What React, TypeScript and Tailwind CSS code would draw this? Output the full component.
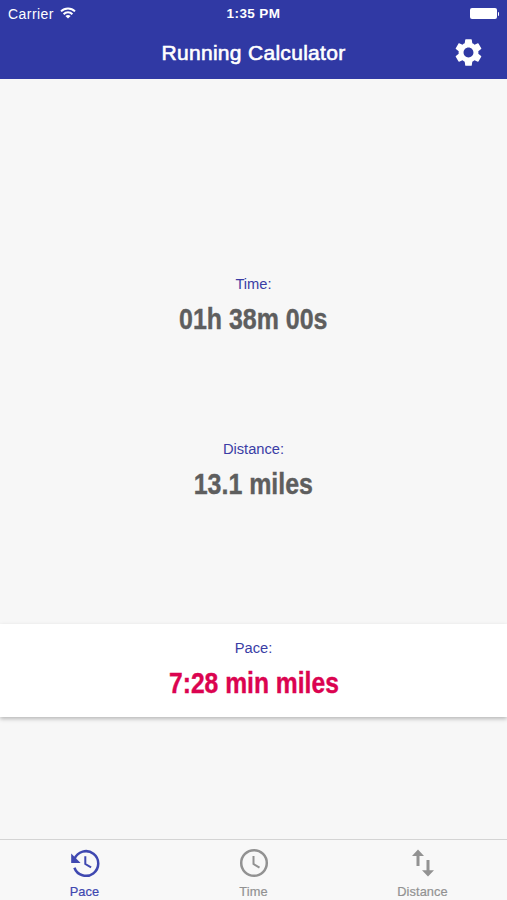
import type { ReactNode } from 'react';
import { MdSettings } from 'react-icons/md';

interface ReadingProps {
  label: string;
  value: string;
  highlight?: boolean;
}

function Reading({ label, value, highlight = false }: ReadingProps) {
  return (
    <div className="flex flex-col items-center whitespace-nowrap">
      <span className="text-[14.7px] leading-5 text-[#3a3da5]">{label}</span>
      <span
        className={`mt-[7px] origin-center text-[29px] leading-9 font-bold [-webkit-text-stroke:0.4px_currentColor] ${
          highlight ? 'scale-x-[0.85] text-[#db0350]' : 'scale-x-[0.86] text-[#5e5e5e]'
        }`}
      >
        {value}
      </span>
    </div>
  );
}

function StatusBar() {
  return (
    <div className="grid h-[27px] grid-cols-3 items-center px-2 text-sm leading-none">
      <div className="flex items-center gap-[6px] pt-px">
        <span className="tracking-[0.45px]">Carrier</span>
        <svg width="16" height="12" viewBox="0 0 16 12" className="mb-[3px]" fill="none" stroke="currentColor" strokeWidth="2">
          <path d="M1 4.4a10 10 0 0 1 14 0M3.6 7.2a6.2 6.2 0 0 1 8.8 0" />
          <path d="M8 11.5 5.4 9.1a3.8 3.8 0 0 1 5.2 0z" fill="currentColor" stroke="none" />
        </svg>
      </div>
      <span className="pt-px text-center text-[13.5px] font-bold tracking-[0.4px]">1:35 PM</span>
      <div className="flex items-center justify-end gap-px">
        <span className="h-[11px] w-[27px] rounded-[2px] bg-white" />
        <span className="h-1 w-px rounded-r bg-white" />
      </div>
    </div>
  );
}

function Tab({ label, active = false, children }: { label: string; active?: boolean; children: ReactNode }) {
  return (
    <button className={`flex flex-col items-center pt-2 ${active ? 'text-[#3f48b0]' : 'text-[#929292]'}`}>
      <svg width="30" height="30" viewBox="0 0 30 30" fill="none" stroke="currentColor" strokeWidth="2.5">
        {children}
      </svg>
      <span className="mt-[6px] text-[12.8px] leading-4 tracking-[0.1px] [-webkit-text-stroke:0.2px_currentColor]">{label}</span>
    </button>
  );
}

export default function App() {
  return (
    <div className="flex h-[900px] w-full flex-col overflow-hidden bg-[#f7f7f7] font-['Liberation_Sans',Arial,sans-serif]">
      <header className="h-[79px] shrink-0 bg-[#3039a4] text-white">
        <StatusBar />
        <div className="grid h-[50px] grid-cols-[60px_1fr_60px] items-center">
          <h1 className="col-start-2 text-center text-[21px] leading-none tracking-[0.3px] [-webkit-text-stroke:0.6px_white]">
            Running Calculator
          </h1>
          <button aria-label="Settings" className="ml-[5px]">
            <MdSettings size={33} />
          </button>
        </div>
      </header>

      <main className="flex flex-1 flex-col">
        <div className="pt-[195px]">
          <Reading label="Time:" value="01h 38m 00s" />
        </div>
        <div className="pt-[102px]">
          <Reading label="Distance:" value="13.1 miles" />
        </div>
        <section className="mt-[122px] h-[93px] bg-white pt-[14px] shadow-[0_2px_4px_rgba(0,0,0,0.25)]">
          <Reading label="Pace:" value="7:28 min miles" highlight />
        </section>
      </main>

      <nav className="grid h-[61px] shrink-0 grid-cols-3 border-t border-[#d4d4d4] bg-[#f8f8f8]">
        <Tab label="Pace" active>
          <path d="M4.5 11A12.3 12.3 0 1 1 4.4 19.7" />
          <path d="M15.3 8.2v7.8l5.8 3.4" strokeWidth="2" />
          <path d="M1.2 5.6v9.4h9.4z" fill="currentColor" stroke="none" />
        </Tab>
        <Tab label="Time">
          <circle cx="15" cy="15" r="12.8" />
          <path d="M14.5 8v8l6 3.7" strokeWidth="2" />
        </Tab>
        <Tab label="Distance">
          <path d="M10 18V6M20 12v12" strokeWidth="3" />
          <path d="M4 8 10 1.5 16 8zM14 22.2h12L20 28.5z" fill="currentColor" stroke="none" />
        </Tab>
      </nav>
    </div>
  );
}
